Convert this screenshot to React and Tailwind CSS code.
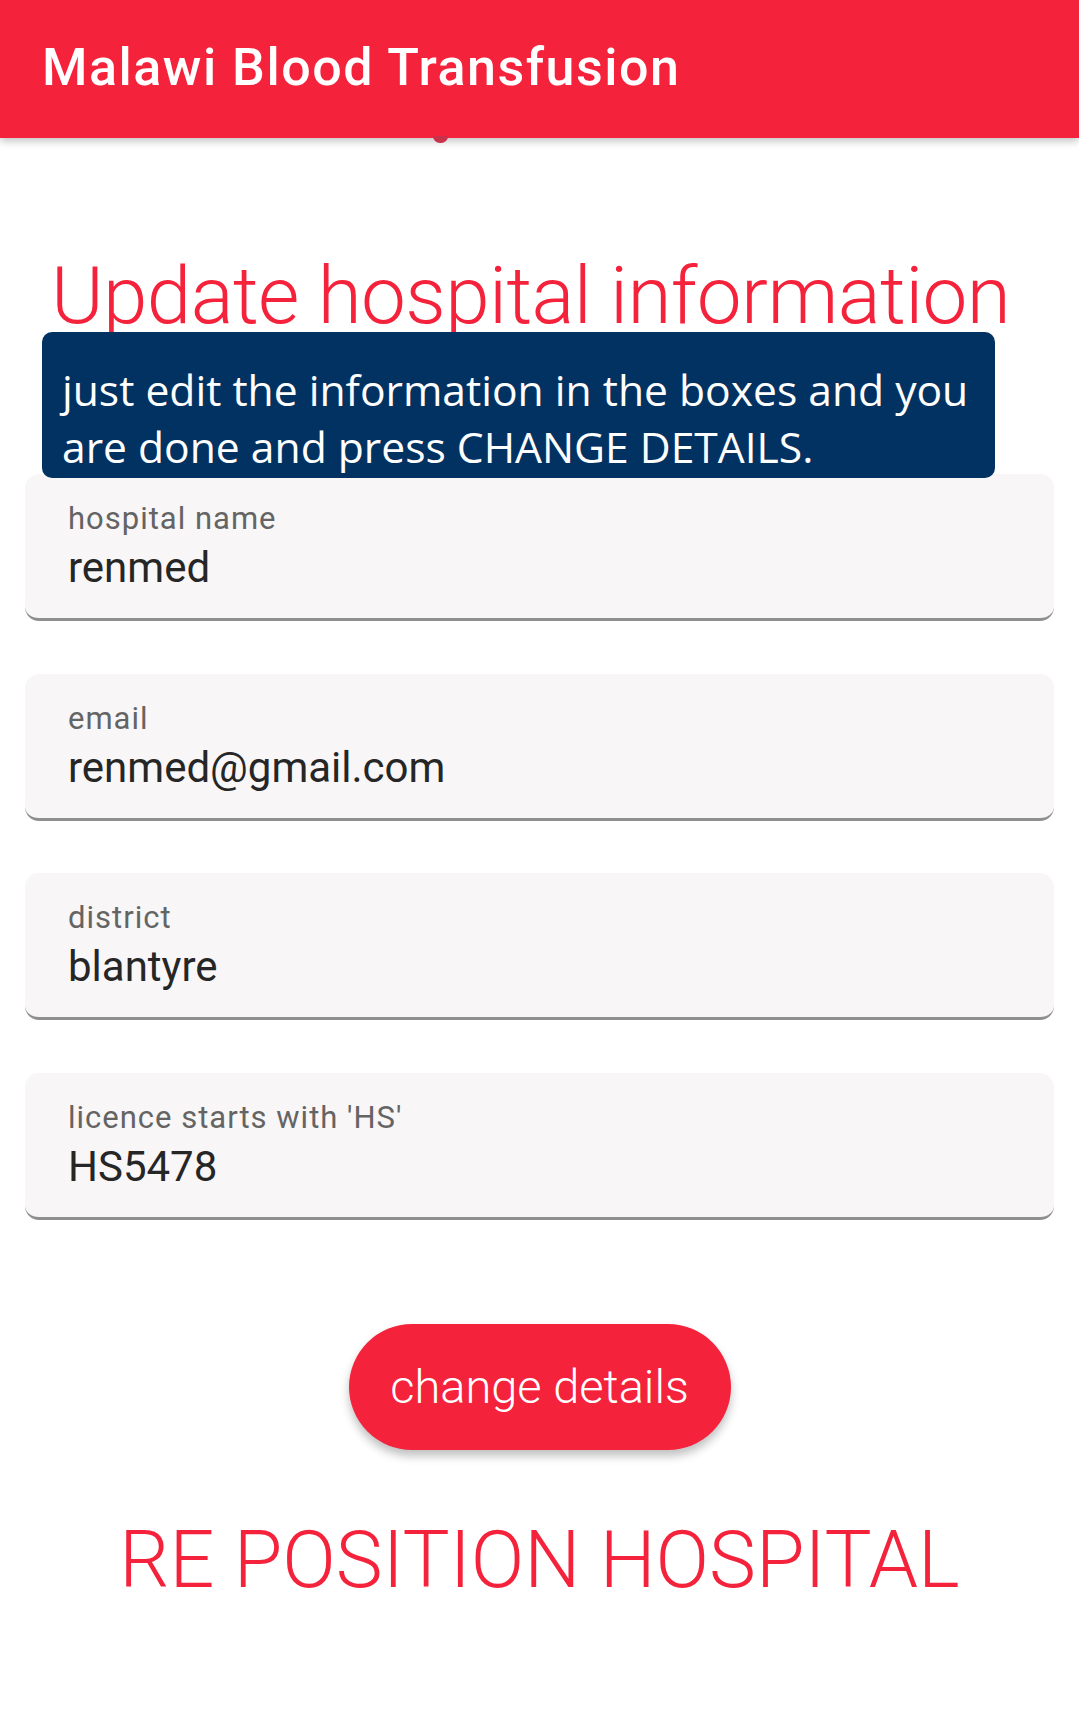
import React from 'react';

const fields = [
  { label: 'hospital name', value: 'renmed' },
  { label: 'email', value: 'renmed@gmail.com' },
  { label: 'district', value: 'blantyre' },
  { label: "licence starts with 'HS'", value: 'HS5478' },
];

const roboto = "font-['Roboto',sans-serif]";

const Field = ({ label, value }) => (
  <div className="h-[147px] rounded-[14px] bg-[#f8f6f7] border-b-[3px] border-[#8f8f8f] pl-[43px] pt-[27px]">
    <div className={`${roboto} text-[31px] leading-[36px] tracking-[1px] text-[#646464]`}>{label}</div>
    <div className={`${roboto} mt-[6px] text-[42px] leading-[49px] text-[#262626]`}>{value}</div>
  </div>
);

export default function App() {
  return (
    <div className="relative w-[1079px] min-h-[1718px] bg-white overflow-hidden">
      <header className="relative z-10 h-[138px] bg-[#f5223b] pl-[42px] pt-[37px] shadow-[0_3px_8px_rgba(0,0,0,0.25)]">
        <h1 className={`${roboto} text-[52px] leading-[61px] tracking-[1.5px] font-medium text-white`}>Malawi Blood Transfusion</h1>
      </header>
      <div className="absolute left-[433px] top-[136px] z-20 h-[7px] w-[15px] rounded-b-full bg-[#c9304a]" />

      <main className="px-[25px]">
        <h2 className={`${roboto} mt-[118px] pl-[26px] text-[80px] leading-[80px] tracking-[-0.6px] font-light text-[#f5223b] whitespace-nowrap`}>
          Update hospital information
        </h2>

        <div className="relative z-10 mt-[-4px] ml-[17px] w-[953px] h-[146px] rounded-[10px] bg-[#023262] pl-[20px] pr-[8px] pt-[29px]">
          <p className="font-['Open_Sans',sans-serif] text-[42.6px] leading-[57px] text-white">
            just edit the information in the boxes and you are done and press CHANGE DETAILS.
          </p>
        </div>

        <div className="mt-[-4px] flex flex-col gap-[52.5px]">
          {fields.map((f) => (
            <Field key={f.label} label={f.label} value={f.value} />
          ))}
        </div>

        <div className="mt-[104px] flex justify-center">
          <button className={`${roboto} h-[126px] w-[382px] rounded-full bg-[#f5223b] pt-[2px] text-[47px] font-light text-white shadow-[0_6px_10px_rgba(0,0,0,0.25)]`}>
            change details
          </button>
        </div>

        <p className={`${roboto} mt-[63px] text-center text-[79px] leading-[94px] font-light text-[#f5223b]`}>
          RE POSITION HOSPITAL
        </p>
      </main>
    </div>
  );
}
